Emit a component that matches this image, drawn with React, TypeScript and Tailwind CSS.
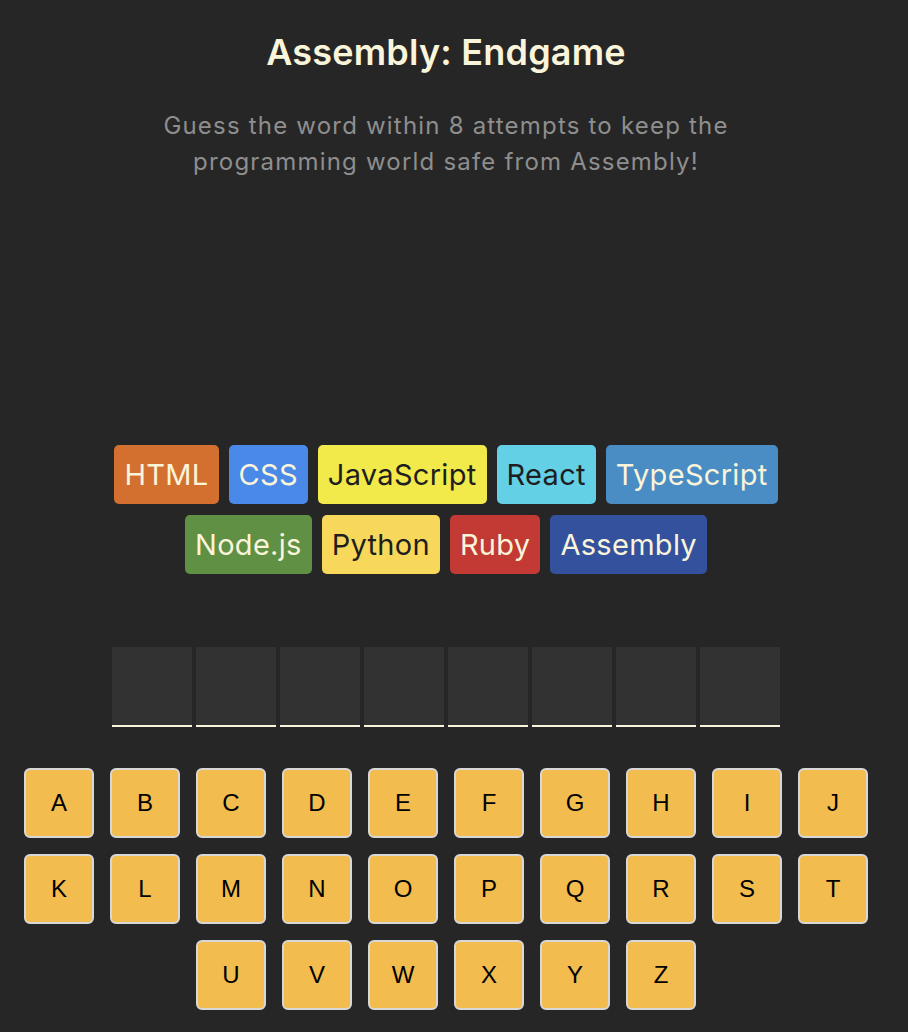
const languages = [
  { name: 'HTML', bg: 'bg-[#D4702F]', text: 'text-[#F9F4DA]' },
  { name: 'CSS', bg: 'bg-[#4A89E8]', text: 'text-[#F9F4DA]' },
  { name: 'JavaScript', bg: 'bg-[#F2EA4B]', text: 'text-[#1E1E1E]' },
  { name: 'React', bg: 'bg-[#63D0E6]', text: 'text-[#1E1E1E]' },
  { name: 'TypeScript', bg: 'bg-[#4A8DC4]', text: 'text-[#F9F4DA]' },
  { name: 'Node.js', bg: 'bg-[#5F9043]', text: 'text-[#F9F4DA]' },
  { name: 'Python', bg: 'bg-[#F8D85A]', text: 'text-[#1E1E1E]' },
  { name: 'Ruby', bg: 'bg-[#C23A33]', text: 'text-[#F9F4DA]' },
  { name: 'Assembly', bg: 'bg-[#34519D]', text: 'text-[#F9F4DA]' },
];

const alphabet = 'ABCDEFGHIJKLMNOPQRSTUVWXYZ'.split('');

export default function App() {
  return (
    <main
      className="min-h-screen bg-[#262626]"
      style={{ fontFamily: 'Inter, Lato, sans-serif' }}
    >
      <div className="w-[892px] flex flex-col items-center pt-[29px] pb-6">
        {/* Header */}
        <header className="flex flex-col items-center text-center">
          <h1 className="text-[36px] leading-[46px] font-semibold tracking-[0.2px] text-[#F9F4DA]">Assembly: Endgame</h1>
          <p className="mt-[33px] max-w-[600px] text-[24px] leading-[36px] tracking-[1.2px] text-[#8E8E8E]">
            Guess the word within 8 attempts to keep the programming world safe from Assembly!
          </p>
        </header>

        {/* Status (empty) */}
        <section className="h-[265px]" />

        {/* Language chips */}
        <section className="flex flex-wrap justify-center gap-x-[10px] gap-y-[11px] max-w-[700px]">
          {languages.map((lang) => (
            <span
              key={lang.name}
              className={`h-[59px] flex items-center px-[10px] rounded-[5px] text-[29px] tracking-[0.3px] ${lang.bg} ${lang.text}`}
            >
              {lang.name}
            </span>
          ))}
        </section>

        {/* Word */}
        <section className="mt-[73px] flex gap-1">
          {Array.from({ length: 8 }).map((_, i) => (
            <span key={i} className="w-20 h-20 bg-[#323232] border-b-2 border-[#F9F4DA]" />
          ))}
        </section>

        {/* Keyboard */}
        <section className="mt-[41px] w-[844px] flex flex-wrap justify-center gap-4">
          {alphabet.map((letter) => (
            <button
              key={letter}
              className="w-[70px] h-[70px] flex items-center justify-center rounded-[6px] border-2 border-[#D7D7D7] bg-[#F2BC4E] text-black text-[24px]"
              style={{ fontFamily: '"Liberation Sans", Arial, sans-serif' }}
            >
              {letter}
            </button>
          ))}
        </section>
      </div>
    </main>
  );
}
